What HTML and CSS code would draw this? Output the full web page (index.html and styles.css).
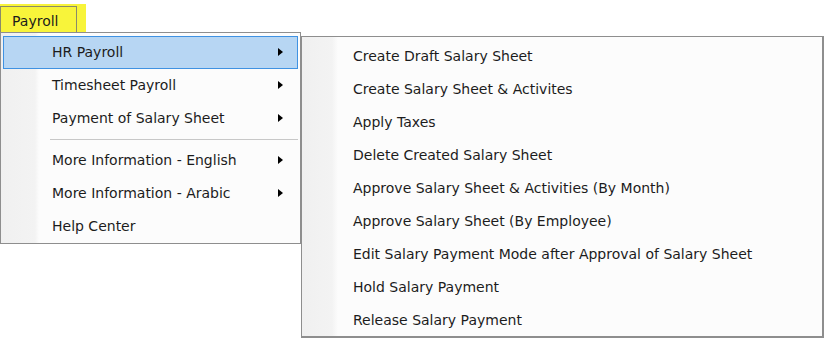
FILE: index.html
```html
<!DOCTYPE html>
<html lang="en">
<head>
  <meta charset="UTF-8">
  <title>Payroll Menu</title>
  <link rel="stylesheet" href="styles.css">
</head>
<body>

  <div class="menubar">
    <div class="highlight">
      <div class="tab">Payroll</div>
    </div>
  </div>

  <div class="menus">
    <ul class="menu main">
      <li class="item active">HR Payroll <span class="arrow"></span></li>
      <li class="item">Timesheet Payroll <span class="arrow"></span></li>
      <li class="item">Payment of Salary Sheet <span class="arrow"></span></li>
      <li class="sep"></li>
      <li class="item">More Information - English <span class="arrow"></span></li>
      <li class="item">More Information - Arabic <span class="arrow"></span></li>
      <li class="item">Help Center</li>
    </ul>

    <ul class="menu sub">
      <li class="item">Create Draft Salary Sheet</li>
      <li class="item">Create Salary Sheet &amp; Activites</li>
      <li class="item">Apply Taxes</li>
      <li class="item">Delete Created Salary Sheet</li>
      <li class="item">Approve Salary Sheet &amp; Activities (By Month)</li>
      <li class="item">Approve Salary Sheet (By Employee)</li>
      <li class="item">Edit Salary Payment Mode after Approval of Salary Sheet</li>
      <li class="item">Hold Salary Payment</li>
      <li class="item">Release Salary Payment</li>
    </ul>
  </div>

</body>
</html>
```

FILE: styles.css
```css
body {
  margin: 0;
  background-color: #ffffff;
  font-family: 'DejaVu Sans', Tahoma, sans-serif;
  font-size: 14px;
  color: #1c1c1c;
}

.menubar {
  height: 32px;
  padding-top: 4px;
  box-sizing: border-box;
}

.highlight {
  width: 86px;
  height: 30px;
  background-color: #f8f43a;
  box-sizing: border-box;
  padding-top: 2px;
}

.tab {
  width: 77px;
  height: 28px;
  box-sizing: border-box;
  border: 1px solid #8a8a6a;
  border-bottom: none;
  padding: 5px 0 0 11px;
  line-height: 18px;
}

.menus {
  display: flex;
  align-items: flex-start;
}

.menu {
  list-style: none;
  margin: 0;
  padding: 3px 2px 0 2px;
  border: 1px solid #8e8e8e;
  box-sizing: border-box;
}

.main {
  width: 301px;
  height: 212px;
  background: linear-gradient(to right, #f0f0f0 0, #f3f3f3 34px, #fcfcfc 38px, #fcfcfc 100%);
  border-top-color: #8e8e8e;
}

.sub {
  width: 523px;
  height: 302px;
  margin-top: 4px;
  margin-left: 0;
  background: linear-gradient(to right, #f0f0f0 0, #f3f3f3 30px, #fcfcfc 36px, #fcfcfc 100%);
  border-right: 2px solid #8e8e8e;
  border-bottom: 2px solid #8e8e8e;
}

.item {
  position: relative;
  height: 33px;
  line-height: 31px;
  border: 1px solid transparent;
  box-sizing: border-box;
  padding-left: 48px;
}

.sub .item {
  padding-left: 48px;
}

.item.active {
  background-color: #b7d6f3;
  border-color: #3f92e2;
}

.arrow {
  position: absolute;
  right: 14px;
  top: 11px;
  width: 0;
  height: 0;
  border-top: 4.5px solid transparent;
  border-bottom: 4.5px solid transparent;
  border-left: 5px solid #000000;
}

.sep {
  height: 9px;
  margin-left: 47px;
  position: relative;
}

.sep::after {
  content: "";
  position: absolute;
  left: 0;
  right: 0;
  top: 4px;
  border-top: 1px solid #c8c8c8;
}
```
